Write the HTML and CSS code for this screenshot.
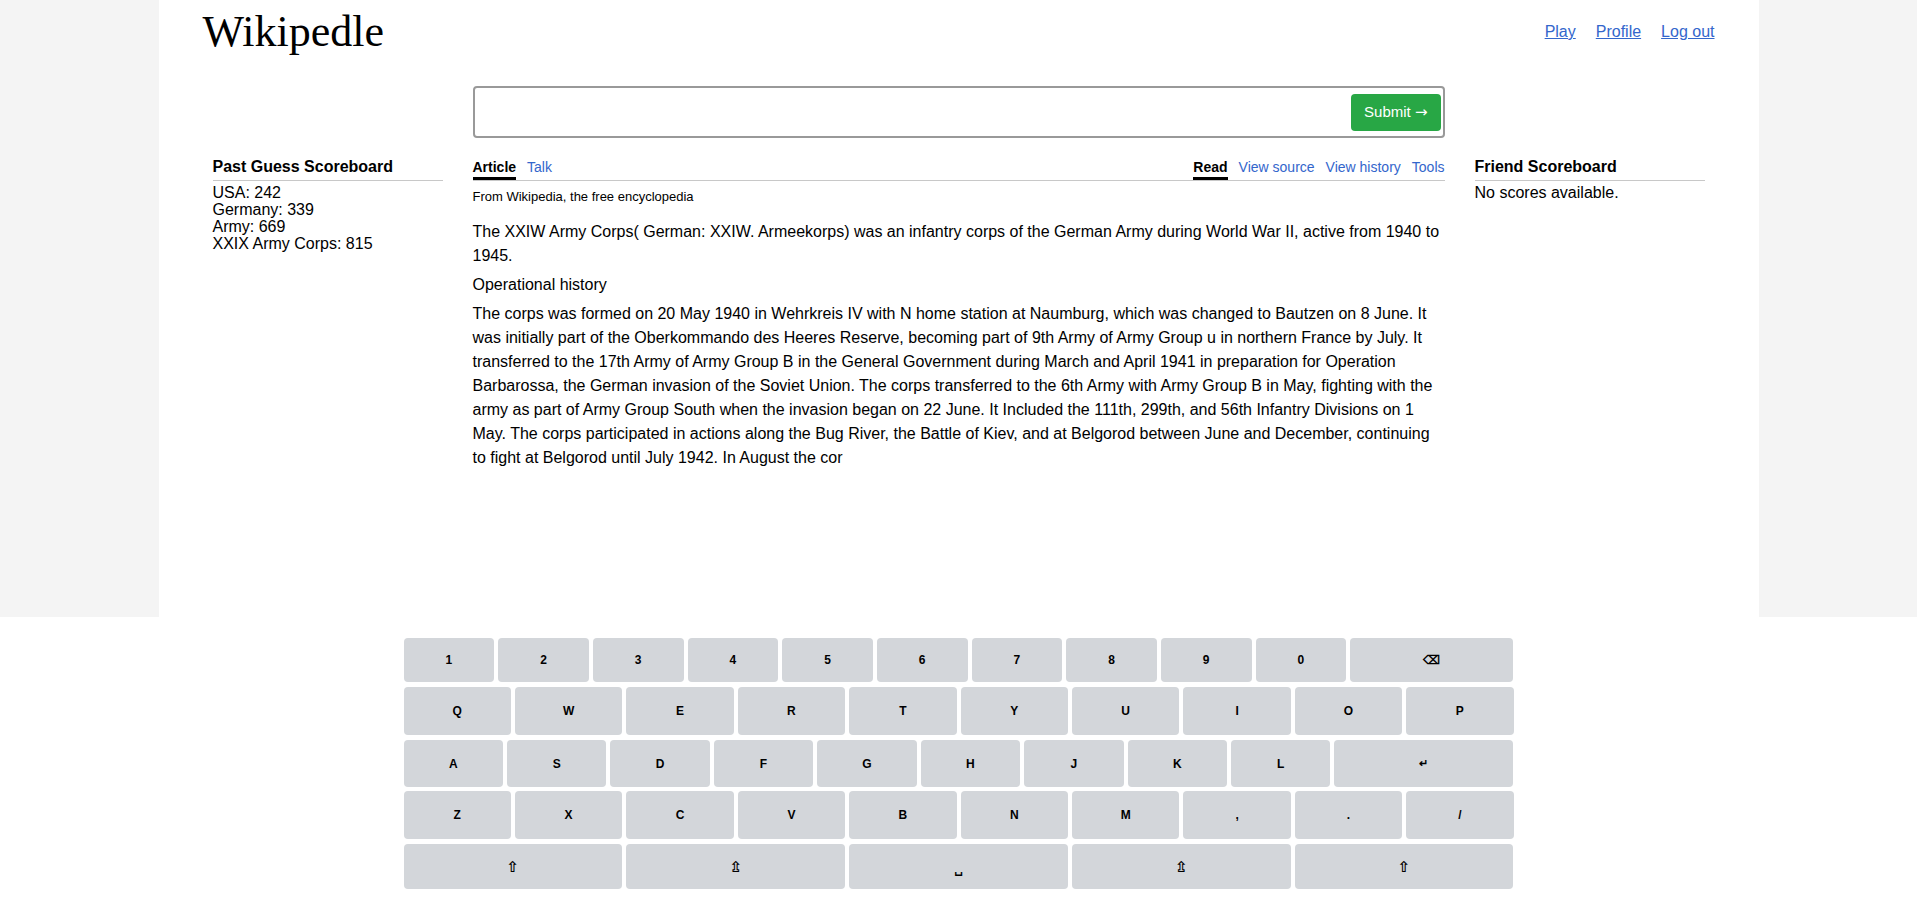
FILE: index.html
```html
<!DOCTYPE html>
<html lang="en">
<head>
<meta charset="utf-8">
<title>Wikipedle</title>
<link rel="stylesheet" href="styles.css">
</head>
<body>
<div class="page">
  <div class="container">
    <header class="header">
      <h1 class="logo">Wikipedle</h1>
      <nav class="nav">
        <a href="#">Play</a>
        <a href="#">Profile</a>
        <a href="#">Log out</a>
      </nav>
    </header>
    <div class="layout">
      <form class="search" onsubmit="return false">
        <input class="search-input" type="text" aria-label="Guess">
        <button class="submit" type="submit">Submit <span class="arrow">→</span></button>
      </form>
      <aside class="board board-left">
        <h3 class="board-title">Past Guess Scoreboard</h3>
        <ul class="board-list">
          <li>USA: 242</li>
          <li>Germany: 339</li>
          <li>Army: 669</li>
          <li>XXIX Army Corps: 815</li>
        </ul>
      </aside>
      <main class="article">
        <div class="tabs">
          <div class="tab-group">
            <span class="tab active">Article</span>
            <a class="tab" href="#">Talk</a>
          </div>
          <div class="tab-group">
            <span class="tab active">Read</span>
            <a class="tab" href="#">View source</a>
            <a class="tab" href="#">View history</a>
            <a class="tab" href="#">Tools</a>
          </div>
        </div>
        <div class="tagline">From Wikipedia, the free encyclopedia</div>
        <div class="body-text">
          <p>The XXIW Army Corps( German: XXIW. Armeekorps) was an infantry corps of the German Army during World War II, active from 1940 to 1945.</p>
          <p>Operational history</p>
          <p>The corps was formed on 20 May 1940 in Wehrkreis IV with N home station at Naumburg, which was changed to Bautzen on 8 June. It was initially part of the Oberkommando des Heeres Reserve, becoming part of 9th Army of Army Group u in northern France by July. It transferred to the 17th Army of Army Group B in the General Government during March and April 1941 in preparation for Operation Barbarossa, the German invasion of the Soviet Union. The corps transferred to the 6th Army with Army Group B in May, fighting with the army as part of Army Group South when the invasion began on 22 June. It Included the 111th, 299th, and 56th Infantry Divisions on 1 May. The corps participated in actions along the Bug River, the Battle of Kiev, and at Belgorod between June and December, continuing to fight at Belgorod until July 1942. In August the cor</p>
        </div>
      </main>
      <aside class="board board-right">
        <h3 class="board-title">Friend Scoreboard</h3>
        <p class="board-empty">No scores available.</p>
      </aside>
    </div>
  </div>
</div>
<div class="keyboard">
  <div class="kb-row r1">
    <button class="key">1</button><button class="key">2</button><button class="key">3</button><button class="key">4</button><button class="key">5</button><button class="key">6</button><button class="key">7</button><button class="key">8</button><button class="key">9</button><button class="key">0</button><button class="key wide">⌫</button>
  </div>
  <div class="kb-row r2">
    <button class="key">Q</button><button class="key">W</button><button class="key">E</button><button class="key">R</button><button class="key">T</button><button class="key">Y</button><button class="key">U</button><button class="key">I</button><button class="key">O</button><button class="key">P</button>
  </div>
  <div class="kb-row r3">
    <button class="key">A</button><button class="key">S</button><button class="key">D</button><button class="key">F</button><button class="key">G</button><button class="key">H</button><button class="key">J</button><button class="key">K</button><button class="key">L</button><button class="key wide small">↵</button>
  </div>
  <div class="kb-row r4">
    <button class="key">Z</button><button class="key">X</button><button class="key">C</button><button class="key">V</button><button class="key">B</button><button class="key">N</button><button class="key">M</button><button class="key">,</button><button class="key">.</button><button class="key">/</button>
  </div>
  <div class="kb-row r5">
    <button class="key sym">⇧</button><button class="key sym">⇫</button><button class="key sym space">␣</button><button class="key sym">⇫</button><button class="key sym">⇧</button>
  </div>
</div>
</body>
</html>
```

FILE: styles.css
```css
* { box-sizing: border-box; }

html, body {
  margin: 0;
  padding: 0;
  background: #ffffff;
  font-family: "Liberation Sans", Arial, sans-serif;
  color: #000;
}

.page {
  height: 617px;
  background: #f4f4f4;
}

.container {
  width: 1600px;
  height: 100%;
  margin: 0 auto;
  background: #ffffff;
}

.header {
  display: flex;
  justify-content: space-between;
  align-items: center;
  padding: 10px 44px 0 44px;
}

.logo {
  margin: 0;
  font-family: "Liberation Serif", "Times New Roman", serif;
  font-weight: normal;
  font-size: 44px;
  line-height: 44px;
  color: #000;
}

.nav {
  display: flex;
  gap: 20px;
}

.nav a {
  font-size: 16px;
  line-height: 16px;
  color: #3366cc;
  text-decoration: underline;
}

.layout {
  width: 1492px;
  margin: 32px auto 0;
  display: grid;
  grid-template-columns: 230px 972px 230px;
  column-gap: 30px;
  row-gap: 19px;
  align-items: start;
}

.search {
  grid-column: 2;
  grid-row: 1;
  height: 52px;
  border: 2px solid #999999;
  border-radius: 4px;
  display: flex;
  align-items: center;
  padding: 0 2px 0 6px;
  margin: 0;
}

.board-left { grid-column: 1; grid-row: 2; }
.article { grid-column: 2; grid-row: 2; }
.board-right { grid-column: 3; grid-row: 2; }

.search-input {
  flex: 1;
  border: none;
  outline: none;
  height: 100%;
  font-size: 16px;
  background: transparent;
}

.submit {
  height: 37px;
  padding: 0 13px;
  border: none;
  border-radius: 4px;
  background: #28a745;
  color: #ffffff;
  font-family: "Liberation Sans", Arial, sans-serif;
  font-size: 15px;
  cursor: pointer;
}

.submit .arrow {
  font-family: "DejaVu Sans", sans-serif;
  font-size: 15px;
}

.board-title {
  margin: 0;
  font-size: 16px;
  line-height: 20px;
  font-weight: bold;
  padding-bottom: 3px;
  border-bottom: 1px solid #c8c8c8;
}

.board-list {
  list-style: none;
  margin: 3px 0 0;
  padding: 0;
  font-size: 16px;
  line-height: 17px;
}

.board-empty {
  margin: 3px 0 0;
  font-size: 16px;
  line-height: 17px;
}

.tabs {
  display: flex;
  justify-content: space-between;
  border-bottom: 1px solid #c8c8c8;
}

.tab-group {
  display: flex;
  gap: 11px;
}

.tab {
  font-size: 14px;
  line-height: 16px;
  padding: 2px 0;
  border-bottom: 3px solid transparent;
  color: #3366cc;
  text-decoration: none;
  white-space: nowrap;
}

.tab.active {
  color: #000;
  font-weight: bold;
  border-bottom-color: #000;
}

.tagline {
  margin-top: 8px;
  font-size: 13px;
  line-height: 16px;
}

.body-text {
  margin-top: 15px;
  font-size: 16px;
  line-height: 24px;
}

.body-text p {
  margin: 0 0 5px;
}

.keyboard {
  width: 1110px;
  margin: 0 auto;
  padding-top: 21px;
  display: flex;
  flex-direction: column;
  gap: 4px;
}

.kb-row {
  display: flex;
  gap: 4px;
}

.r1 { height: 44px; margin-bottom: 1px; }
.r2 { height: 48px; margin-bottom: 1px; }
.r3 { height: 47px; }
.r4 { height: 48px; margin-bottom: 1px; }
.r5 { height: 45px; }

.key {
  flex: 1 1 0;
  min-width: 0;
  border: none;
  border-radius: 4px;
  background: #d3d6da;
  color: #000;
  font-family: "Liberation Sans", Arial, sans-serif;
  font-size: 12px;
  font-weight: bold;
  padding: 0;
  cursor: pointer;
}

.key.wide { flex-grow: 1.8; }

.key.small { font-size: 11px; }

.key.sym {
  font-family: "DejaVu Sans", sans-serif;
  font-size: 15px;
  font-weight: bold;
}

.key.space {
  font-size: 12px;
  padding-top: 4px;
}
```
